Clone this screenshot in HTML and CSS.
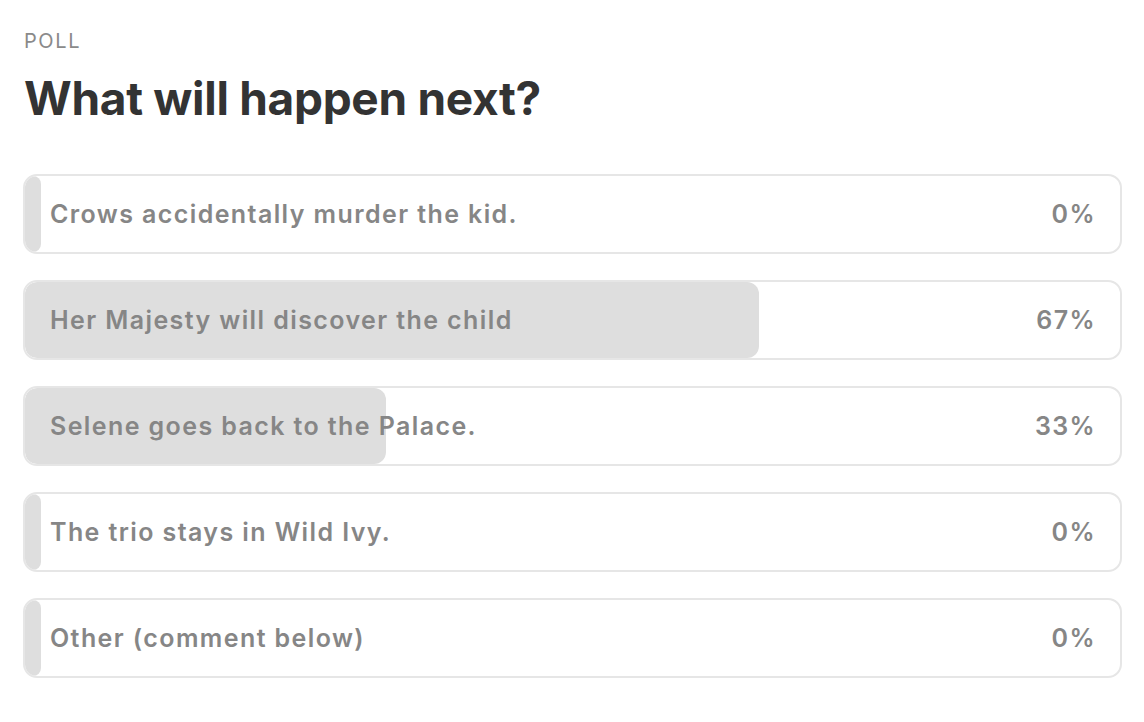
FILE: index.html
```html
<!DOCTYPE html>
<html>
<head>
<meta charset="utf-8">
<link rel="stylesheet" href="styles.css">
</head>
<body>
<div class="poll">
  <div class="label">POLL</div>
  <h1 class="title">What will happen next?</h1>
  <div class="options">
    <div class="option">
      <div class="bar" style="width:0%"></div>
      <span class="text">Crows accidentally murder the kid.</span>
      <span class="pct">0%</span>
    </div>
    <div class="option">
      <div class="bar" style="width:67%"></div>
      <span class="text">Her Majesty will discover the child</span>
      <span class="pct">67%</span>
    </div>
    <div class="option">
      <div class="bar" style="width:33%"></div>
      <span class="text">Selene goes back to the Palace.</span>
      <span class="pct">33%</span>
    </div>
    <div class="option">
      <div class="bar" style="width:0%"></div>
      <span class="text">The trio stays in Wild Ivy.</span>
      <span class="pct">0%</span>
    </div>
    <div class="option">
      <div class="bar" style="width:0%"></div>
      <span class="text">Other (comment below)</span>
      <span class="pct">0%</span>
    </div>
  </div>
</div>
</body>
</html>
```
FILE: styles.css
```css
html, body {
  margin: 0;
  padding: 0;
  background: #fff;
}
body {
  font-family: Inter, "Noto Sans", sans-serif;
  padding: 29px 22px 0 23px;
}
.label {
  font-size: 20px;
  line-height: 24px;
  color: #8a8a8a;
  letter-spacing: 1.6px;
  margin-left: 1px;
}
.title {
  margin: 17px 0 0 1px;
  font-size: 46px;
  line-height: 56px;
  font-weight: 700;
  color: #333;
  letter-spacing: -0.3px;
}
.options {
  margin-top: 48px;
  display: flex;
  flex-direction: column;
  gap: 26px;
}
.option {
  position: relative;
  height: 76px;
  border: 2px solid #e6e6e6;
  border-radius: 14px;
  display: flex;
  align-items: center;
  justify-content: space-between;
  padding: 0 25px 0 25px;
  overflow: hidden;
}
.bar {
  position: absolute;
  left: 0;
  top: 0;
  bottom: 0;
  min-width: 16px;
  background: #dedede;
  border-radius: 12px;
}
.text, .pct {
  position: relative;
  font-size: 25px;
  font-weight: 600;
  color: #868686;
  letter-spacing: 1.4px;
}
.pct {
  margin-right: -1px;
}
```
